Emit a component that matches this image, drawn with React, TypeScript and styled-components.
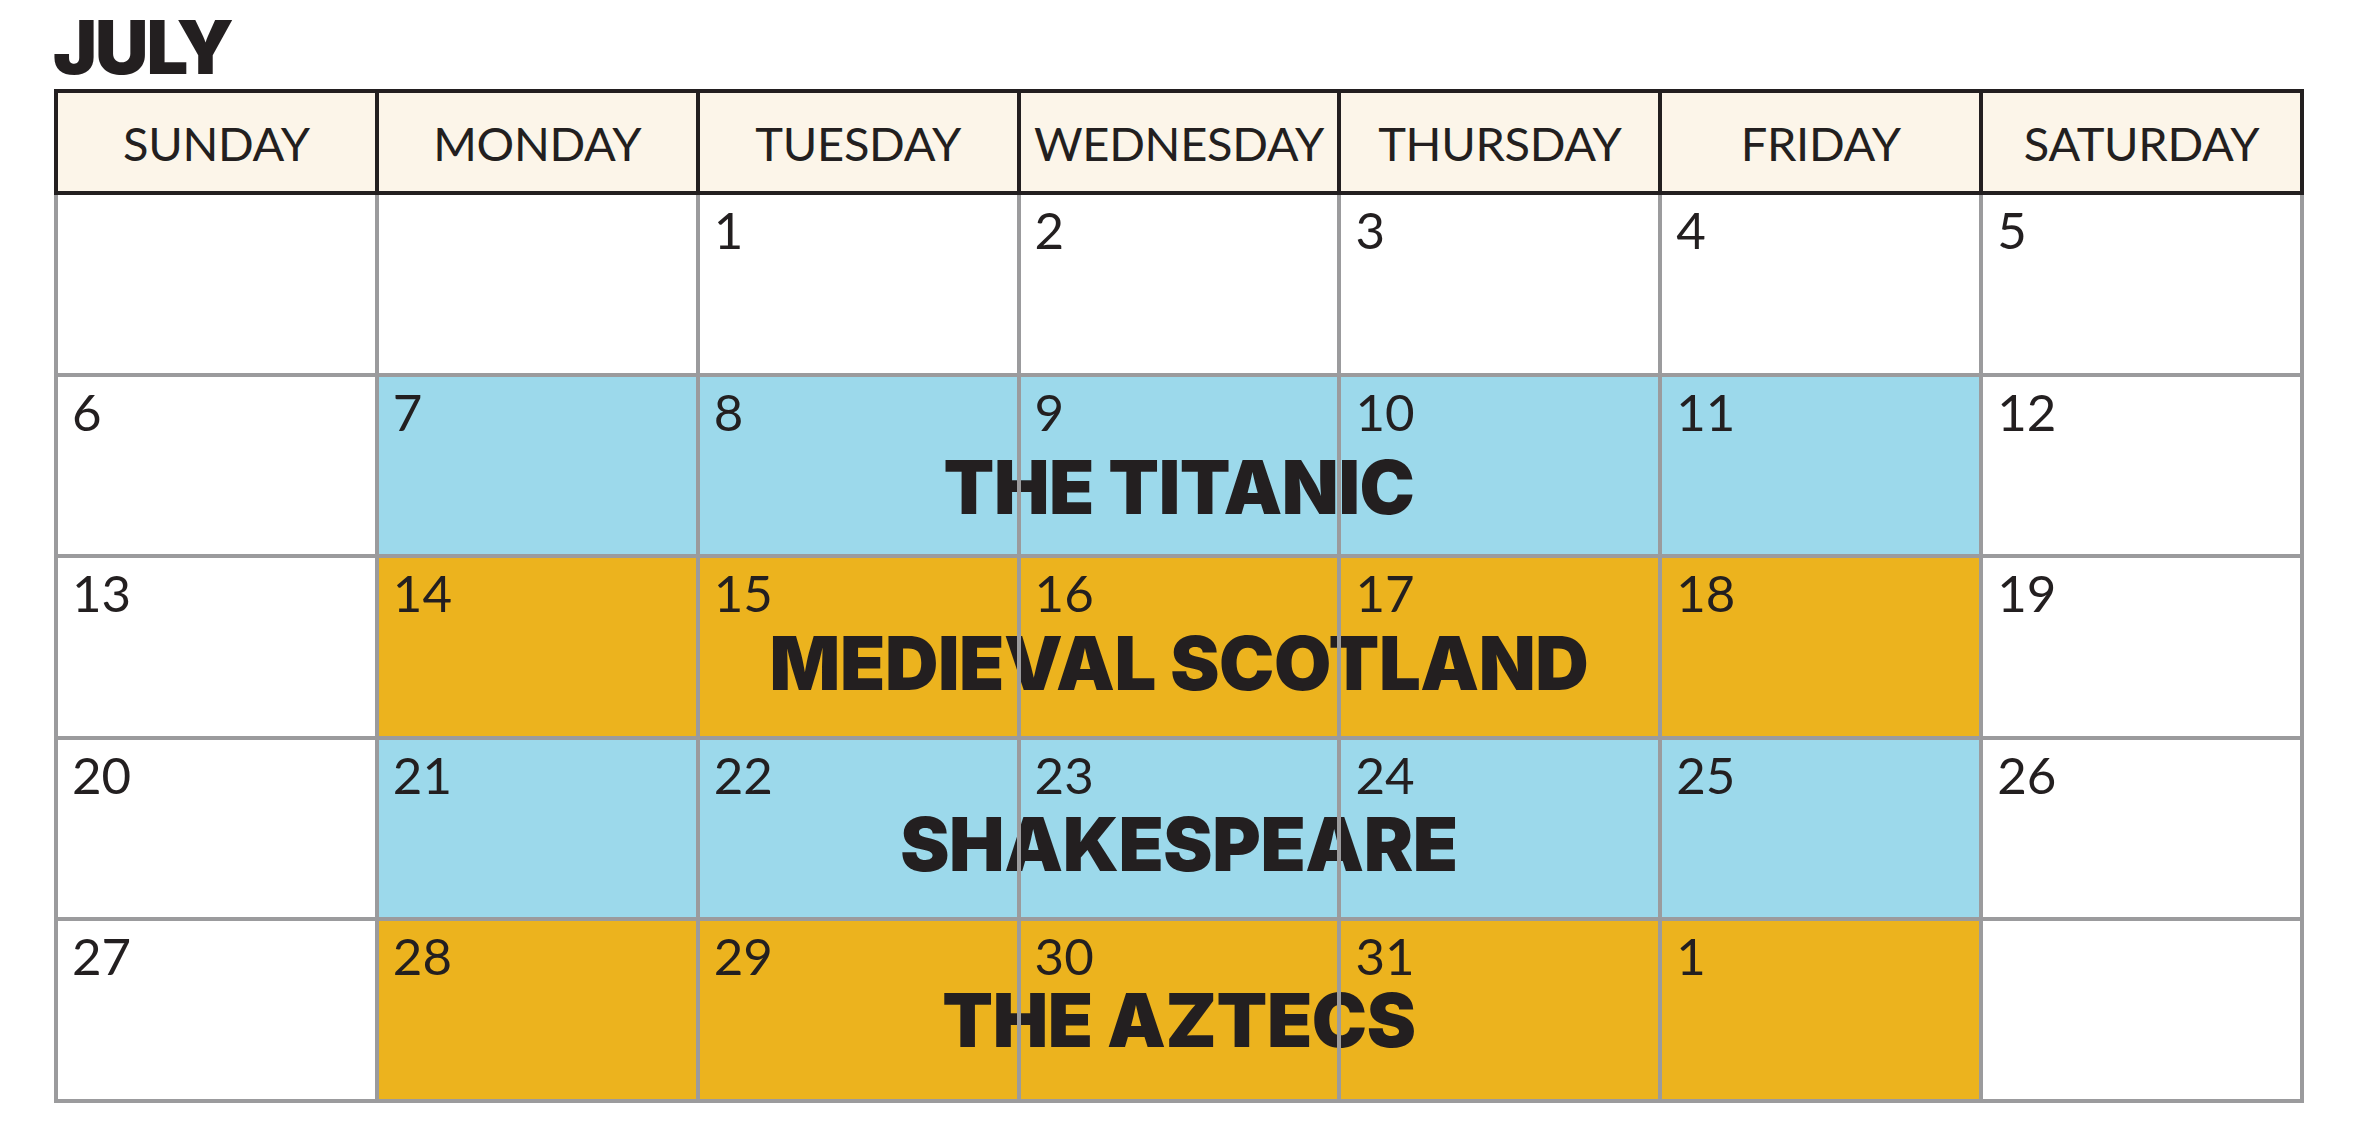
import styled, { createGlobalStyle } from "styled-components";

const DAYS = [
  "SUNDAY",
  "MONDAY",
  "TUESDAY",
  "WEDNESDAY",
  "THURSDAY",
  "FRIDAY",
  "SATURDAY",
];

type Week = {
  dates: (number | null)[];
  topic: string;
  color: string;
  offset: number;
};

const BLUE = "#9cd9eb";
const GOLD = "#ecb31e";

const WEEKS: Week[] = [
  { dates: [null, null, 1, 2, 3, 4, 5], topic: "", color: "", offset: 0 },
  { dates: [6, 7, 8, 9, 10, 11, 12], topic: "THE TITANIC", color: BLUE, offset: 73 },
  { dates: [13, 14, 15, 16, 17, 18, 19], topic: "MEDIEVAL SCOTLAND", color: GOLD, offset: 68 },
  { dates: [20, 21, 22, 23, 24, 25, 26], topic: "SHAKESPEARE", color: BLUE, offset: 67 },
  { dates: [27, 28, 29, 30, 31, 1, null], topic: "THE AZTECS", color: GOLD, offset: 62 },
];

const App = () => {
  return (
    <Page>
      <GlobalStyle />
      <Month>JULY</Month>
      <Calendar>
        {DAYS.map((day, i) => (
          <DayName key={day} first={i === 0}>
            {day}
          </DayName>
        ))}

        {WEEKS.map((week, w) => {
          const row = w + 2;
          return [
            week.topic && (
              <Band key={`band-${w}`} row={row} color={week.color} />
            ),
            week.topic && (
              <Topic key={`topic-${w}`} row={row} offset={week.offset}>
                {week.topic}
              </Topic>
            ),
            ...week.dates.map((date, d) => (
              <Cell key={`${w}-${d}`} row={row} col={d + 1}>
                {date}
              </Cell>
            )),
          ];
        })}
      </Calendar>
    </Page>
  );
};

const GlobalStyle = createGlobalStyle`
  html, body {
    margin: 0;
    padding: 0;
    background: #ffffff;
  }
`;

const Page = styled.div`
  display: flex;
  flex-direction: column;
  padding: 10px 0 0 54px;
  color: #231f20;
`;

const Month = styled.h1`
  margin: 0 0 5px -1px;
  font-family: Inter, "Liberation Sans", sans-serif;
  font-weight: 900;
  font-size: 74px;
  line-height: 74px;
  letter-spacing: -2px;
`;

const Calendar = styled.div`
  display: grid;
  width: 2250px;
  height: 1014px;
  grid-template-columns: 324.86px repeat(6, 1fr);
  grid-template-rows: 106px repeat(5, 1fr);
`;

const DayName = styled.div<{ first: boolean }>`
  display: flex;
  align-items: center;
  justify-content: center;
  background: #fcf5e9;
  border-top: 4px solid #231f20;
  border-right: 4px solid #231f20;
  border-bottom: 4px solid #231f20;
  border-left: ${(p) => (p.first ? "4px solid #231f20" : "none")};
  font-family: Lato, "Open Sans", sans-serif;
  font-weight: 400;
  font-size: 47px;
  letter-spacing: -0.3px;
  padding-top: 2px;
`;

const Band = styled.div<{ row: number; color: string }>`
  grid-row: ${(p) => p.row};
  grid-column: 2 / 7;
  background: ${(p) => p.color};
  z-index: 0;
`;

const Topic = styled.div<{ row: number; offset: number }>`
  grid-row: ${(p) => p.row};
  grid-column: 1 / -1;
  align-self: start;
  justify-self: center;
  margin-top: ${(p) => p.offset + 10}px;
  font-family: Inter, "Liberation Sans", sans-serif;
  font-weight: 900;
  font-size: 74px;
  line-height: 54px;
  letter-spacing: -0.4px;
  z-index: 1;
`;

const Cell = styled.div<{ row: number; col: number }>`
  grid-row: ${(p) => p.row};
  grid-column: ${(p) => p.col};
  position: relative;
  z-index: 2;
  padding: 9px 14px;
  border-right: 4px solid #9b9b9d;
  border-bottom: 4px solid #9b9b9d;
  border-left: ${(p) => (p.col === 1 ? "4px solid #9b9b9d" : "none")};
  font-family: Lato, "Open Sans", sans-serif;
  font-weight: 400;
  font-size: 51px;
  line-height: 1;
`;

export default App;
